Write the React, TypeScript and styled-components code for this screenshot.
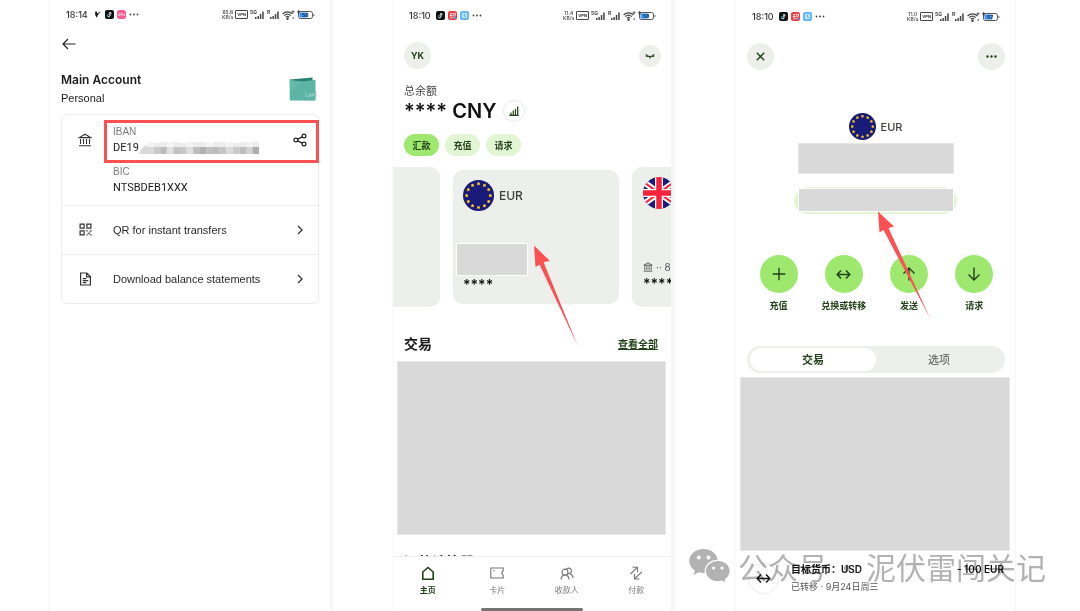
import React from 'react';
import styled, { createGlobalStyle } from 'styled-components';

const GlobalStyle = createGlobalStyle`
  *, *::before, *::after { box-sizing: border-box; }
  body {
    margin: 0;
    background: #fff;
    color: #1b1b1b;
    font-family: Inter, "Noto Sans CJK SC", sans-serif;
    font-size: 11px;
  }
  button { font: inherit; color: inherit; border: 0; background: none; padding: 0; margin: 0; cursor: pointer; }
  a { color: inherit; }
  h1, h2, p, dl, dt, dd { margin: 0; padding: 0; font-weight: inherit; font-size: inherit; }
  svg { display: block; flex: none; }
`;

const forest = '#23411a';
const lime = '#9fe870';
const paleLime = '#e2f6d5';
const sage = '#ecefea';
const cover = '#d9d9d9';
const red = '#fb5153';

const Page = styled.main`
  position: relative;
  display: grid;
  grid-template-columns: 285fr 283fr 282fr;
  gap: 59px;
  padding: 0 64px 0 48px;
  min-height: 100vh;
  overflow: hidden;
`;

const Phone = styled.section<{ $top: number; $left: number; $right: number }>`
  display: flex;
  flex-direction: column;
  min-width: 0;
  padding-top: ${(p) => p.$top}px;
  border-left: ${(p) => p.$left}px solid #f9f9f9;
  border-right: ${(p) => p.$right}px solid #f6f6f6;
`;

/* ---------- status bar ---------- */

const Bar = styled.header`
  display: flex;
  align-items: center;
  height: 29px;
  margin-bottom: 1px;
  padding: 0 15px 0 16px;
`;

const Clock = styled.span`
  margin-right: 5px;
  font-size: 9px;
  font-weight: 500;
  color: #333;
`;

const AppIcons = styled.span`
  display: flex;
  align-items: center;
  gap: 3px;
`;

const Indicators = styled.span`
  display: flex;
  align-items: center;
  gap: 2px;
  margin-left: auto;
`;

const Speed = styled.span`
  font-size: 5px;
  line-height: 5px;
  font-weight: 500;
  text-align: center;
  color: #444;
`;

const Vpn = styled.span`
  padding: 0 1px;
  border: 1px solid #444;
  border-radius: 1px;
  font-size: 4px;
  line-height: 7px;
  font-weight: 700;
  color: #333;
`;

const TinyText = styled.text`
  font-family: Inter, sans-serif;
  font-size: 5px;
  font-weight: 700;
`;

const Signal = ({ tag }: { tag: string }) => (
  <svg width={tag.length > 1 ? 15 : 13} height="10" viewBox={tag.length > 1 ? '0 0 15 10' : '2 0 13 10'} fill="#444">
    <TinyText x={tag.length > 1 ? 0 : 2} y="4">{tag}</TinyText>
    <path d="M5 7h1.500v2H5zM7.400 6h1.500v3H7.400zM9.800 4h1.500v5H9.800zM12.200 1.500h1.500V9h-1.500z" />
  </svg>
);

const Wifi = () => (
  <svg width="13" height="10" viewBox="0 0 13 10" fill="none" stroke="#444" strokeWidth="1.200">
    <path d="M.6 4C3.300 1.200 7.700 1.200 10.400 4M2.200 5.600c1.900-1.800 4.700-1.800 6.600 0M3.900 7.200c.9-.8 2.300-.8 3.200 0" />
    <circle cx="5.500" cy="8.700" r=".6" fill="#444" />
    <path d="M11 .3v3M9.500 1.800h3M11.200 7v2.200" strokeWidth=".9" />
  </svg>
);

const Battery = ({ level }: { level: number }) => (
  <svg width="18" height="10" viewBox="0 0 18 10">
    <rect x="1.500" y="1.500" width="14" height="7" rx="2" fill="#fff" stroke="#555" />
    <rect x="2.500" y="2.500" width="8" height="5" rx="1" fill="#3d97f7" />
    <path d="M16.500 3.500v3l1.300-1.500z" fill="#555" />
    <path d="M1.700 0v4M0 1.900h3.400" stroke="#333" strokeWidth=".9" />
    <TinyText x="5" y="7" fill="#16334f">{level}</TinyText>
  </svg>
);

const TikTok = () => (
  <svg width="9" height="9" viewBox="0 0 9 9">
    <rect width="9" height="9" rx="2" fill="#111" />
    <path d="M4.800 2v3.600a1.200 1.200 0 1 1-1.200-1.200" fill="none" stroke="#5fe0e0" strokeWidth=".9" />
    <path d="M5 2c.1 1 .8 1.600 1.700 1.700M5 2v3.600a1.200 1.200 0 0 1-2 .8" fill="none" stroke="#f4f4f4" strokeWidth=".8" />
    <path d="M5.400 3.800v2" stroke="#f24465" strokeWidth=".5" />
  </svg>
);

const PinkApp = () => (
  <svg width="9" height="9" viewBox="0 0 9 9">
    <rect width="9" height="9" rx="2.500" fill="#ff5c93" />
    <path d="M1.500 3.500v2h1.300v-2M4 5.500v-2h1v2M6.200 3.500v2h1.300v-2" fill="none" stroke="#ffd7e5" strokeWidth=".7" />
  </svg>
);

const RedApp = () => (
  <svg width="9" height="9" viewBox="0 0 9 9">
    <rect width="9" height="9" rx="2" fill="#ee3d42" />
    <path d="M2 2.500h2.500M1.700 4.500h3M5.500 2.300h2v2h-2zM3 2v4M2 7.200l5-1.500" fill="none" stroke="#fff" strokeWidth=".7" />
    <circle cx="6.800" cy="6.800" r="1.200" fill="#6d8df0" />
  </svg>
);

const BlueApp = () => (
  <svg width="9" height="9" viewBox="0 0 9 9">
    <rect width="9" height="9" rx="2" fill="#5db7f6" />
    <rect x="1.800" y="1.800" width="5.400" height="5.400" rx="1.200" fill="#b9e2ff" />
    <path d="M4.300 2.800v2l1.800 1.300" fill="none" stroke="#4b9fe6" strokeWidth=".8" />
  </svg>
);

const Flick = () => (
  <svg width="9" height="7" viewBox="-2 0 9 7">
    <path d="M.2.600h1.700v2L5.900.300 3.200 3.300 1.800 6.700.2 4z" fill="#111" />
  </svg>
);

const Dots = () => (
  <svg width="10" height="3" viewBox="0 0 10 3" fill="#444">
    <circle cx="1.500" cy="1.500" r=".9" />
    <circle cx="5" cy="1.500" r=".9" />
    <circle cx="8.500" cy="1.500" r=".9" />
  </svg>
);

const StatusBar = ({ time, speed, level, children }: {
  time: string; speed: string; level: number; children: React.ReactNode;
}) => (
  <Bar>
    <Clock>{time}</Clock>
    <AppIcons>{children}<Dots /></AppIcons>
    <Indicators>
      <Speed>{speed}<br />KB/s</Speed>
      <Vpn>VPN</Vpn>
      <Signal tag="5G" />
      <Signal tag="R" />
      <Wifi />
      <Battery level={level} />
    </Indicators>
  </Bar>
);

/* ---------- shared pieces ---------- */

const RoundButton = styled.button<{ $size: number }>`
  display: flex;
  align-items: center;
  justify-content: center;
  width: ${(p) => p.$size}px;
  height: ${(p) => p.$size}px;
  border-radius: 50%;
  background: ${sage};
  color: ${forest};
  font-size: 9px;
  font-weight: 700;
`;

const TopRow = styled.div`
  display: flex;
  align-items: center;
  justify-content: space-between;
  margin: 11px 10px 0 11px;
`;

const Cover = styled.div`
  flex: 1 0 173px;
  margin: 0 5px 0 4px;
  border: 1px solid #e6e6e6;
  background: ${cover};
`;

const PointerSvg = styled.svg<{ $left: string; $top: string }>`
  position: absolute;
  z-index: 2;
  left: ${(p) => p.$left};
  top: ${(p) => p.$top};
  pointer-events: none;
`;

const EuFlag = ({ size }: { size: number }) => (
  <svg width={size} height={size} viewBox="0 0 32 32">
    <circle cx="16" cy="16" r="16" fill="#1a1a78" />
    {Array.from({ length: 12 }, (_, i) => {
      const a = (i * Math.PI) / 6;
      const x = 16 + 12.200 * Math.sin(a);
      const y = 16 - 12.200 * Math.cos(a);
      return (
        <path
          key={i}
          transform={`translate(${x} ${y}) scale(.75)`}
          d="M0-1.900.600-.600 1.900-.500.900.400 1.200 1.700 0 1-1.200 1.700-.900.400-1.900-.500-.600-.600z"
          fill="#ffd21f"
          stroke="#ffd21f"
          strokeWidth="1"
          strokeLinejoin="round"
        />
      );
    })}
  </svg>
);

const UkFlag = () => (
  <svg width="32" height="32" viewBox="0 0 32 32">
    <defs><clipPath id="round"><circle cx="16" cy="16" r="16" /></clipPath></defs>
    <g clipPath="url(#round)">
      <rect width="32" height="32" fill="#1a1a78" />
      <path d="M-2 3 34 29M34 3-2 29" stroke="#fff" strokeWidth="6" />
      <path d="M-2 3 34 29M34 3-2 29" stroke="#f5233c" strokeWidth="2" />
      <path d="M16 0v32M0 16h32" stroke="#fff" strokeWidth="8" />
      <path d="M16 0v32M0 16h32" stroke="#f5233c" strokeWidth="5.500" />
    </g>
  </svg>
);

const Bank = ({ size }: { size: number }) => (
  <svg width={size} height={size} viewBox="0 0 14 14" fill="none" stroke="#333" strokeWidth="1.100">
    <path d="M1.300 4.600 7 1.200l5.700 3.400zM2.500 6v5M5.500 6v5M8.500 6v5M11.500 6v5M1 12.800h12" />
  </svg>
);

const SwapArrow = ({ size }: { size: number }) => (
  <svg width={size} height={size} viewBox="0 0 16 16" fill="none" stroke="currentColor" strokeWidth="1.600">
    <path d="M1.500 8h13M5.300 3.800 1.300 8l4 4.200M10.700 3.800l4 4.200-4 4.200" />
  </svg>
);

/* ---------- account details phone ---------- */

const BackButton = styled.button`
  align-self: flex-start;
  display: flex;
  align-items: center;
  height: 28px;
  margin-left: 12px;
`;

const AccountHead = styled.div`
  display: flex;
  align-items: center;
  justify-content: space-between;
  margin: 13px 12px 0 11px;
  line-height: 18px;
`;

const AccountName = styled.h1`
  font-size: 12px;
  font-weight: 600;
`;

const AccountKind = styled.p`
  font-family: "Liberation Sans", sans-serif;
`;

const DetailCard = styled.div`
  margin: 7px 11px 0;
  border: 1px solid #ececec;
  border-radius: 6px;
  font-family: "Liberation Sans", sans-serif;
`;

const Identifiers = styled.div`
  display: grid;
  grid-template-columns: 42px 1fr;
  padding-top: 5px;
  height: 90px;
`;

const LeadIcon = styled.span`
  display: flex;
  justify-content: center;
  padding: 13px 0 0 4px;
`;

const Highlight = styled.div`
  display: flex;
  align-items: center;
  justify-content: space-between;
  height: 43px;
  margin-right: -1px;
  padding: 0 9px 3px 6px;
  border: 3px solid ${red};
`;

const Pair = styled.dl`
  line-height: 16px;
`;

const BicPair = styled(Pair)`
  padding: 1px 0 0 9px;
`;

const Term = styled.dt`
  font-size: 10px;
  color: #7c7c7c;
`;

const Value = styled.dd`
  display: flex;
  align-items: center;
  line-height: 16px;
  font-family: Roboto, sans-serif;
  font-size: 11px;
`;

const LinkRow = styled.button`
  display: grid;
  grid-template-columns: 51px 1fr auto;
  align-items: center;
  width: 100%;
  height: 49px;
  padding: 0 14px 1px 0;
  border-top: 1px solid #ececec;
  text-align: left;
  color: #2a2a2a;
`;

const RowIcon = styled.span`
  padding-left: 17px;
`;

const tones = ['#dadada', '#c9c9c9', '#bdbdbd', '#e0e0e0', '#c2c2c2', '#c8c8c8', '#dedede', '#bcbcbc', '#b0b0b0', '#c0c0c0', '#bcbcbc', '#c6c6c6', '#dcdcdc', '#cacaca', '#bdbdbd', '#d2d2d2', '#adadad'];

const Mosaic = () => (
  <svg width="120" height="14" viewBox="0 0 120 14">
    <path d="M0 13C2 6 8 3 14 2.500V13z" fill="#d8d8d8" />
    {tones.map((tone, i) => (
      <g key={i}>
        <rect x={8 + i * 6.600} y={i % 4 === 1 ? 2 : 1} width="6.700" height="5" fill={i % 3 ? '#ececec' : '#f3f3f3'} />
        <rect x={8 + i * 6.600} y="6" width="6.700" height="7" fill={tone} />
      </g>
    ))}
  </svg>
);

const Wallet = () => (
  <svg width="29" height="25" viewBox="0 0 29 25">
    <path d="M25 8l3.500 10-2.500 6H15z" fill="#ddd" />
    <path d="M1 2.500 23.500.500V6H1z" fill="#2b7f70" />
    <path d="M.500 2.500Q8 4.800 15 4.200L26.500 2.800V23.500H.800Z" fill="#5cb5a4" />
    <path d="M1 3.500 14 5l-13 9z" fill="#63baa9" />
    <path d="M17 15.500v3.800h2.500M20.500 17h1.800v2.300h-1.800zM23.500 19.300V17h1.500v2.300" fill="none" stroke="#a5dacf" strokeWidth=".7" />
  </svg>
);

const Chevron = () => (
  <svg width="8" height="10" viewBox="0 0 8 10" fill="none" stroke="#333" strokeWidth="1.300">
    <path d="M2 1l4 4-4 4" />
  </svg>
);

const AccountPhone = () => (
  <Phone $top={0} $left={2} $right={3}>
    <StatusBar time="18:14" speed="65.6" level={56}><Flick /><TikTok /><PinkApp /></StatusBar>
    <BackButton aria-label="Back">
      <svg width="14" height="12" viewBox="0 0 14 12" fill="none" stroke="#222" strokeWidth="1.200">
        <path d="M13.500 6H1.200M6 1 1 6l5 5" />
      </svg>
    </BackButton>
    <AccountHead>
      <div>
        <AccountName>Main Account</AccountName>
        <AccountKind>Personal</AccountKind>
      </div>
      <Wallet />
    </AccountHead>
    <DetailCard>
      <Identifiers>
        <LeadIcon><Bank size={14} /></LeadIcon>
        <div>
          <Highlight>
            <Pair>
              <Term>IBAN</Term>
              <Value>DE19<Mosaic /></Value>
            </Pair>
            <button aria-label="Share">
              <svg width="14" height="14" viewBox="0 0 14 14" fill="none" stroke="#222" strokeWidth="1.200">
                <circle cx="2.800" cy="7" r="1.900" />
                <circle cx="11" cy="3" r="1.900" />
                <circle cx="11" cy="11" r="1.900" />
                <path d="M4.600 6.100 9.200 3.900M4.600 7.900l4.600 2.200" />
              </svg>
            </button>
          </Highlight>
          <BicPair>
            <Term>BIC</Term>
            <Value>NTSBDEB1XXX</Value>
          </BicPair>
        </div>
      </Identifiers>
      <LinkRow>
        <RowIcon>
          <svg width="13" height="13" viewBox="0 0 13 13" fill="none" stroke="#333" strokeWidth="1.200">
            <path d="M1.100 1.100h4v4h-4zM7.900 1.100h4v4h-4zM1.100 7.900h4v4h-4z" />
            <path d="M7.300 7.800h1.400M10 9.200h1.200M11.300 7.800h1.400M8.600 10.500H10M7.300 12h1.400M11.300 12h1.400M10.200 11h1" />
          </svg>
        </RowIcon>
        <span>QR for instant transfers</span>
        <Chevron />
      </LinkRow>
      <LinkRow>
        <RowIcon>
          <svg width="13" height="14" viewBox="0 0 13 14" fill="none" stroke="#333" strokeWidth="1.200">
            <path d="M1.600 1h6.200L11.400 4.600V13H1.600zM7.600 1v3.800h3.800M3.800 6.700h3.400M3.800 8.700h5.400M3.800 10.700h3.400" />
          </svg>
        </RowIcon>
        <span>Download balance statements</span>
        <Chevron />
      </LinkRow>
    </DetailCard>
  </Phone>
);

/* ---------- home phone ---------- */

const TotalLabel = styled.p`
  margin: 14px 0 0 11px;
  line-height: 16px;
  color: #4a4a4a;
`;

const TotalRow = styled.div`
  display: flex;
  align-items: center;
  gap: 7px;
  height: 24px;
  margin-left: 11px;
  font-size: 20px;
  font-weight: 600;
  color: #111;
`;

const ChartButton = styled(RoundButton)`
  border: 1px solid #e8eae6;
  background: #fff;
`;

const Pills = styled.div`
  display: flex;
  gap: 6px;
  margin: 11px 0 0 11px;
`;

const Pill = styled.button<{ $main?: boolean }>`
  width: 35px;
  height: 22px;
  border-radius: 11px;
  background: ${(p) => (p.$main ? lime : paleLime)};
  color: ${forest};
  font-size: 9px;
  font-weight: 600;
`;

const Carousel = styled.div`
  display: grid;
  grid-template-columns: 47px 1fr 39px;
  column-gap: 13px;
  align-items: center;
  margin-top: 11px;
`;

const SideCard = styled.article<{ $radius: string }>`
  height: 140px;
  padding: 10px 0 0 11px;
  border-radius: ${(p) => p.$radius};
  background: ${sage};
  overflow: hidden;
  white-space: nowrap;
`;

const MainCard = styled.article`
  position: relative;
  height: 134px;
  padding: 10px 0 0 3px;
  border-radius: 10px;
  background: ${sage};
`;

const Currency = styled.div<{ $size: number; $inset: number }>`
  display: flex;
  align-items: center;
  gap: 5px;
  padding-left: ${(p) => p.$inset}px;
  font-size: ${(p) => p.$size}px;
  font-weight: 500;
  color: #3c3f3a;
`;

const Redacted = styled.div`
  width: 72px;
  height: 33px;
  margin-top: 32px;
  border: 1px solid #fff;
  background: ${cover};
`;

const Masked = styled.p`
  padding-left: 7px;
  font-size: 14px;
  line-height: 18px;
  font-weight: 600;
  color: #111;
`;

const AccountRef = styled.p`
  display: flex;
  align-items: center;
  gap: 3px;
  margin-top: 50px;
  font-size: 10px;
  line-height: 16px;
  color: #555;
`;

const SideMasked = styled(Masked)`
  padding-left: 0;
`;

const SectionHead = styled.div`
  display: flex;
  align-items: center;
  justify-content: space-between;
  height: 20px;
  margin: 27px 13px 7px 11px;
`;

const SectionTitle = styled.h2`
  font-size: 14px;
  line-height: 18px;
  font-weight: 600;
  color: #1b1b1b;
`;

const AllLink = styled.a`
  font-size: 10px;
  line-height: 18px;
  font-weight: 600;
  color: ${forest};
  text-decoration: underline;
`;

const NextSection = styled.div`
  height: 21px;
  padding: 18px 0 0 11px;
  overflow: hidden;
`;

const Nav = styled.nav`
  display: grid;
  grid-template-columns: repeat(4, 1fr);
  height: 52px;
  padding-top: 9px;
  border-top: 1px solid #f0f0f0;
`;

const NavItem = styled.a<{ $active?: boolean }>`
  display: flex;
  flex-direction: column;
  align-items: center;
  gap: 5px;
  font-size: 8px;
  line-height: 10px;
  font-weight: ${(p) => (p.$active ? 700 : 400)};
  color: ${(p) => (p.$active ? forest : '#777')};
  text-decoration: none;
`;

const HomeIndicator = styled.div`
  width: 102px;
  height: 3px;
  margin: 0 auto;
  border-radius: 2px;
  background: #767373;
`;

const navItems = [
  { label: '主页', path: 'M1.800 13.200V6L7 1.500 12.200 6v7.200z', width: 1.600 },
  { label: '卡片', path: 'M.800 2h12.400v2.500c-1.500 1.500-1.500 3.500 0 5V12H.800zM3.200 4.800h1.600', width: 1.100 },
  { label: '收款人', path: 'M5 9.200a3 3 0 1 1 0-6 3 3 0 0 1 0 6zM1 13.500c.2-2.800 1.800-4.300 4-4.300s3.800 1.500 4 4.300M6.300 3.400a2.800 2.800 0 1 1 3.200 4.200c2 .5 3.400 2 3.500 4.400', width: 1.200 },
  { label: '付款', path: 'M1.500 8 8.500 1.200M3.500 1.200h5v5M12.800 5.800 5.500 13M5.500 8v5h5', width: 1.100 },
];

const HomePhone = () => (
  <Phone $top={1} $left={1} $right={4}>
    <StatusBar time="18:10" speed="11.4" level={58}><TikTok /><RedApp /><BlueApp /></StatusBar>
    <TopRow>
      <RoundButton $size={27}>YK</RoundButton>
      <RoundButton $size={22} aria-label="Hide balance">
        <svg width="10" height="6" viewBox="0 0 10 6" fill="none" stroke={forest} strokeWidth="1.200">
          <path d="M.800 1.300c2 3 6.400 3 8.400 0M2.200 2.600 1.200 4M5 3.500v1.900M7.800 2.600l1 1.400" />
        </svg>
      </RoundButton>
    </TopRow>
    <TotalLabel>总余额</TotalLabel>
    <TotalRow>
      <span>**** CNY</span>
      <ChartButton $size={22} aria-label="Insights">
        <svg width="10" height="10" viewBox="0 0 10 10" stroke={forest} fill="none" strokeWidth="1.200">
          <path d="M.300 9.300h9.400M2 9V6.500M4.300 9V4.500M6.500 9V3M8.700 9V.500" />
        </svg>
      </ChartButton>
    </TotalRow>
    <Pills>
      <Pill $main>汇款</Pill>
      <Pill>充值</Pill>
      <Pill>请求</Pill>
    </Pills>
    <Carousel>
      <SideCard $radius="0 10px 10px 0" />
      <MainCard>
        <Currency $size={12} $inset={7}><EuFlag size={31} />EUR</Currency>
        <Redacted />
        <Masked>****</Masked>
        <PointerSvg $left="80px" $top="75px" width="46" height="102" viewBox="0 0 46 102">
          <path d="M1 .500 17 16 10.500 17 44.800 101 6.500 19.500 2.500 22z" fill={red} />
        </PointerSvg>
      </MainCard>
      <SideCard $radius="10px 0 0 10px">
        <UkFlag />
        <AccountRef><Bank size={10} />·· 87</AccountRef>
        <SideMasked>****</SideMasked>
      </SideCard>
    </Carousel>
    <SectionHead>
      <SectionTitle>交易</SectionTitle>
      <AllLink href="#all">查看全部</AllLink>
    </SectionHead>
    <Cover />
    <NextSection><SectionTitle>汇款计算器</SectionTitle></NextSection>
    <Nav>
      {navItems.map((item, i) => (
        <NavItem key={item.label} href="#nav" $active={i === 0}>
          <svg width="14" height="14" viewBox="0 0 14 14" fill="none" stroke="currentColor" strokeWidth={item.width}>
            <path d={item.path} />
          </svg>
          {item.label}
        </NavItem>
      ))}
    </Nav>
    <HomeIndicator />
  </Phone>
);

/* ---------- balance phone ---------- */

const BalanceHead = styled.div`
  display: flex;
  justify-content: center;
  margin-top: 43px;
`;

const BalanceCover = styled.div`
  align-self: center;
  width: 156px;
  height: 31px;
  margin-top: 3px;
  border: 1px solid #e6e6e6;
  background: ${cover};
`;

const DetailsPill = styled.div`
  position: relative;
  align-self: center;
  width: 163px;
  height: 27px;
  margin-top: 13px;
  padding: 1px 3px 2px 4px;
  border-radius: 14px;
  background: ${paleLime};
`;

const PillCover = styled.div`
  height: 24px;
  border: 1px solid #fff;
  background: ${cover};
`;

const Actions = styled.div`
  display: grid;
  grid-template-columns: repeat(4, 1fr);
  margin: 41px 8px 0 10px;
`;

const Action = styled.button`
  display: flex;
  flex-direction: column;
  align-items: center;
  gap: 7px;
  font-size: 9px;
  line-height: 12px;
  font-weight: 600;
  color: ${forest};
`;

const ActionDisc = styled.span`
  display: flex;
  align-items: center;
  justify-content: center;
  width: 38px;
  height: 38px;
  border-radius: 50%;
  background: ${lime};
`;

const Tabs = styled.div`
  display: grid;
  grid-template-columns: 1fr 1fr;
  height: 27px;
  margin: 34px 10px 4px 11px;
  padding: 2px 3px;
  border-radius: 14px;
  background: ${sage};
`;

const Tab = styled.button<{ $on?: boolean }>`
  border-radius: 12px;
  background: ${(p) => (p.$on ? '#fff' : 'transparent')};
  font-size: 11px;
  line-height: 16px;
  font-weight: ${(p) => (p.$on ? 600 : 400)};
  color: ${(p) => (p.$on ? forest : '#555')};
`;

const Transaction = styled.div`
  display: flex;
  align-items: center;
  gap: 12px;
  height: 60px;
  padding: 0 11px 6px 12px;
`;

const TransactionDisc = styled.span`
  display: flex;
  align-items: center;
  justify-content: center;
  width: 31px;
  height: 31px;
  border: 1px solid #ececec;
  border-radius: 50%;
`;

const TransactionText = styled.div`
  flex: 1;
`;

const TransactionLine = styled.p`
  display: flex;
  justify-content: space-between;
  font-size: 10px;
  line-height: 18px;
  font-weight: 600;
  color: #111;
`;

const TransactionNote = styled.p`
  font-size: 9px;
  line-height: 18px;
  color: #555;
`;

const BalancePhone = () => (
  <Phone $top={2} $left={2} $right={1}>
    <StatusBar time="18:10" speed="11.0" level={57}><TikTok /><RedApp /><BlueApp /></StatusBar>
    <TopRow>
      <RoundButton $size={27} aria-label="Close">
        <svg width="9" height="9" viewBox="0 0 9 9" stroke={forest} strokeWidth="1.400">
          <path d="M.800.800l7.400 7.400M8.200.800.800 8.200" />
        </svg>
      </RoundButton>
      <RoundButton $size={27} aria-label="More">
        <svg width="11" height="3" viewBox="0 0 11 3" fill={forest}>
          <circle cx="1.500" cy="1.500" r="1.200" />
          <circle cx="5.500" cy="1.500" r="1.200" />
          <circle cx="9.500" cy="1.500" r="1.200" />
        </svg>
      </RoundButton>
    </TopRow>
    <BalanceHead><Currency $size={11} $inset={0}><EuFlag size={27} />EUR</Currency></BalanceHead>
    <BalanceCover />
    <DetailsPill>
      <PillCover />
      <PointerSvg $left="83px" $top="24px" width="54" height="109" viewBox="0 0 54 109">
        <path d="M1 .500 17 15.500 11.500 17 53.500 108 6.500 19 2.500 21.500z" fill={red} />
      </PointerSvg>
    </DetailsPill>
    <Actions>
      <Action>
        <ActionDisc>
          <svg width="14" height="14" viewBox="0 0 14 14" stroke={forest} strokeWidth="1.400"><path d="M7 .700v12.600M.700 7h12.600" /></svg>
        </ActionDisc>
        充值
      </Action>
      <Action>
        <ActionDisc><SwapArrow size={15} /></ActionDisc>
        兑换或转移
      </Action>
      <Action>
        <ActionDisc>
          <svg width="14" height="14" viewBox="0 0 14 14" fill="none" stroke={forest} strokeWidth="1.400"><path d="M7 13.500V1M1.500 6.500 7 1l5.500 5.500" /></svg>
        </ActionDisc>
        发送
      </Action>
      <Action>
        <ActionDisc>
          <svg width="14" height="14" viewBox="0 0 14 14" fill="none" stroke={forest} strokeWidth="1.400"><path d="M7 .500V13M1.500 7.500 7 13l5.500-5.500" /></svg>
        </ActionDisc>
        请求
      </Action>
    </Actions>
    <Tabs role="tablist">
      <Tab role="tab" aria-selected="true" $on>交易</Tab>
      <Tab role="tab" aria-selected="false">选项</Tab>
    </Tabs>
    <Cover />
    <Transaction>
      <TransactionDisc><SwapArrow size={15} /></TransactionDisc>
      <TransactionText>
        <TransactionLine><span>目标货币：USD</span><span>- 100 EUR</span></TransactionLine>
        <TransactionNote>已转移 · 9月24日周三</TransactionNote>
      </TransactionText>
    </Transaction>
  </Phone>
);

/* ---------- watermark ---------- */

const Watermark = styled.div`
  position: absolute;
  z-index: 3;
  right: 34px;
  bottom: 25px;
  display: flex;
  align-items: center;
  gap: 7px;
  font-family: "Noto Sans CJK SC", sans-serif;
  font-size: 30px;
  line-height: 40px;
  font-weight: 400;
  color: #b2b2b2;
  white-space: nowrap;
  mix-blend-mode: multiply;
  pointer-events: none;
`;

const MiddleDot = styled.span`
  margin: 0 4px;
`;

const WeChat = () => (
  <svg width="42" height="34" viewBox="0 0 42 34" fill="#b2b2b2">
    <path d="M14.500 0C6.500 0 .300 5.200.300 12c0 4 2.200 7.300 5.500 9.500L4.700 26l5-2.700c1.500.4 3.200.7 4.800.7 8 0 14.200-5.300 14.200-12S22.500 0 14.500 0z" />
    <path d="M28.800 11.300c-7 0-12.500 4.700-12.500 10.700s5.500 10.800 12.500 10.800c1.500 0 3-.2 4.300-.6l4.200 2.300-1-3.900c3-2 4.900-5.100 4.900-8.600 0-6-5.400-10.700-12.400-10.700z" stroke="#fff" strokeWidth="1.300" />
    <g fill="#fff">
      <circle cx="9.800" cy="8.600" r="2" />
      <circle cx="19.500" cy="8.600" r="2" />
      <circle cx="24.600" cy="19" r="1.600" />
      <circle cx="33" cy="19" r="1.600" />
    </g>
  </svg>
);

export default function App() {
  return (
    <>
      <GlobalStyle />
      <Page>
        <AccountPhone />
        <HomePhone />
        <BalancePhone />
        <Watermark><WeChat /><span>公众号<MiddleDot>·</MiddleDot>泥伏雷闯关记</span></Watermark>
      </Page>
    </>
  );
}
